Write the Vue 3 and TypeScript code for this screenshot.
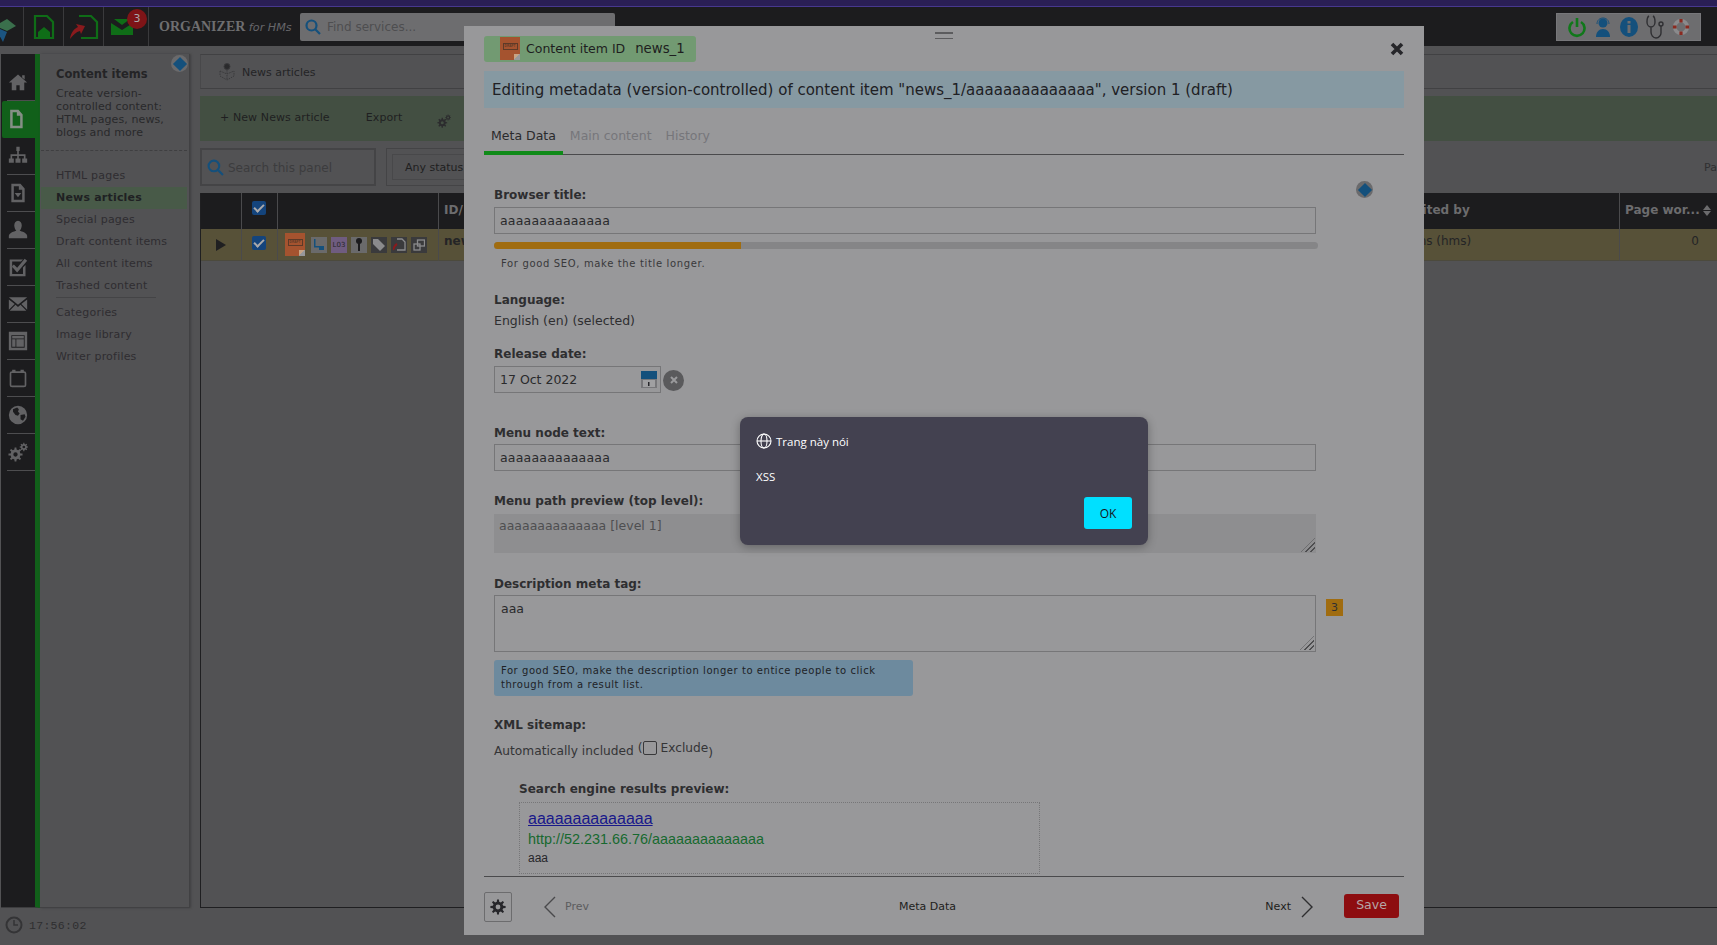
<script setup lang="ts">
// builds a cog outline, the hole is cut out through fill-rule evenodd
function gear(cx: number, cy: number, outer: number, inner: number, hole: number, teeth: number): string {
  const pts: string[] = []
  const step = (Math.PI * 2) / teeth
  for (let i = 0; i < teeth; i++) {
    const a = i * step
    const spots = [
      [a - step * 0.28, inner],
      [a - step * 0.16, outer],
      [a + step * 0.16, outer],
      [a + step * 0.28, inner]
    ]
    for (const [ang, r] of spots) {
      pts.push(`${(cx + Math.cos(ang) * r).toFixed(2)} ${(cy + Math.sin(ang) * r).toFixed(2)}`)
    }
  }
  const circle = `M${cx - hole} ${cy}a${hole} ${hole} 0 1 0 ${hole * 2} 0a${hole} ${hole} 0 1 0 ${-hole * 2} 0z`
  return `M${pts.join('L')}z${circle}`
}

const twoGears = gear(9, 15, 8.5, 6, 2.6, 8) + gear(19, 6, 5, 3.6, 1.6, 8)
const oneGear = gear(12, 12, 11.5, 8, 3.6, 8)

const railItems = [
  { id: 'home', path: 'M12 3 1 12.500h3.500V22h5.500v-6h4v6h5.500v-9.500H23zM17 4h3v5l-3-2.500z', active: false },
  { id: 'doc', path: 'M5 1h10l5 5.500V23H5zM8 4v16h9V8h-4V4z', active: true },
  { id: 'tree', path: 'M10 1h4v5h-1v4h8v5h2v5h-6v-5h2v-3h-6v3h2v5H9v-5h2v-3H5v3h2v5H1v-5h2v-5h8V6h-1z', active: false },
  { id: 'file', path: 'M4 1h11l5 5.500V23H4zM7 4v16h10V8h-4V4zm1 8h8l-4 5z', active: false },
  { id: 'user', path: 'M12 1c3 0 4.500 3 4.500 5.500S15 12 14 13c3 1 8 2 9 6v3H1v-3c1-4 6-5 9-6-1-1-2.500-4-2.500-6.500S9 1 12 1z', active: false },
  { id: 'check', path: 'M2 3h16l-2.500 2.500H5v15h13v-8l3-3V23H2zm5 6 4 4 9-11 3 2.500-12 14-6.500-7z', active: false },
  { id: 'mail', path: 'M1 4h22L12 13zM1 6.500l7 5.500-7 7zm22 0V19l-7-7zM9 13l3 2.500 3-2.500 7 7H2z', active: false },
  { id: 'layout', path: 'M1 1h22v22H1zm3 4v15h16V5zm1 1h14v3H5zm0 4h4v9H5zm5 0h9v9h-9z', active: false },
  { id: 'cal', path: 'M5 2h4v2h6V2h4v2c2 0 3 1 3 3v13c0 2-1 3-3 3H5c-2 0-3-1-3-3V7c0-2 1-3 3-3zm0 4c-1 0-1 0-1 1v13c0 1 0 1 1 1h14c1 0 1 0 1-1V7c0-1 0-1-1-1z', active: false },
  { id: 'globe', path: 'M12 1a11 11 0 1 0 0 22 11 11 0 0 0 0-22zM6 5l5-2 2 2-1 3 2 2-2 3-3-1-3-4zm9 7 5-1 1 3-3 5-3-2z', active: false },
  { id: 'gears', path: twoGears, active: false }
]

const navTop = ['HTML pages', 'News articles', 'Special pages', 'Draft content items', 'All content items', 'Trashed content']
const navBottom = ['Categories', 'Image library', 'Writer profiles']
</script>

<template>
  <div class="page">
    <div class="strip"></div>

    <header class="topbar">
      <div class="logo">
        <svg width="23" height="39" viewBox="0 0 23 39">
          <polygon points="-5,19 7,12 16,19 7,24" fill="#3a6f4c" />
          <polygon points="-5,20 7,25 3,35" fill="#1b5480" />
        </svg>
      </div>
      <div class="top-btn">
        <svg width="22" height="26" viewBox="0 0 22 26" fill="none" stroke="#0f6d17" stroke-width="2.200">
          <path d="M2 2h12l6 6v16H2z" />
          <path d="M5 18l6-5 6 5v5H5z" fill="#0f6d17" stroke="none" />
        </svg>
      </div>
      <div class="top-btn">
        <svg width="30" height="26" viewBox="0 0 30 26" fill="none">
          <path d="M10 2h12l6 6v16H12" stroke="#0f6d17" stroke-width="2.200" />
          <path d="M1 25c1-7 4-10 8-12l-2-3 9 2-4 8-1-3c-4 1-7 4-10 8z" fill="#8a1a1d" />
        </svg>
      </div>
      <div class="top-btn mail">
        <svg width="22" height="16" viewBox="0 0 22 16">
          <path d="M0 4 11 11 22 4v12H0zM3 0h16L11 6z" fill="#0f6d17" />
        </svg>
        <span class="badge">3</span>
      </div>
      <div class="brand"><b>ORGANIZER</b> <i>for HMs</i></div>
      <div class="find">
        <svg width="16" height="16" viewBox="0 0 16 16" fill="none" stroke="#14507c" stroke-width="2.200">
          <circle cx="6.500" cy="6.500" r="5" />
          <path d="m10 10 5 5" />
        </svg>
        <span>Find services...</span>
      </div>
      <div class="status-icons">
        <svg width="18" height="22" viewBox="0 0 18 22" fill="none" stroke="#10781a" stroke-width="2.600">
          <path d="M5 6a7.500 7.500 0 1 0 8 0M9 2v9" />
        </svg>
        <svg width="18" height="22" viewBox="0 0 18 22" fill="#14507c">
          <circle cx="9" cy="7" r="4.500" />
          <path d="M2 21c0-5 3-8 7-8s7 3 7 8z" />
          <path d="M3 8c0-8 12-8 12 0" fill="none" stroke="#14507c" />
        </svg>
        <svg width="18" height="22" viewBox="0 0 18 22">
          <ellipse cx="9" cy="11" rx="9" ry="10" fill="#14507c" />
          <rect x="7.500" y="9" width="3" height="8" fill="#6d6d6f" />
          <rect x="7.500" y="5" width="3" height="2.500" fill="#6d6d6f" />
        </svg>
        <svg width="18" height="24" viewBox="0 0 18 24" fill="none" stroke="#2f2f32" stroke-width="1.400">
          <path d="M3 1C1 2 1 4 1 7c0 3 2 5 4 5s4-2 4-5c0-3 0-5-2-6M5 12v5c0 3 2 6 5 6s5-3 5-5v-7" />
          <circle cx="15" cy="9" r="2" />
        </svg>
        <svg width="18" height="20" viewBox="0 0 20 22" fill="none">
          <circle cx="10" cy="11" r="7" stroke="#8a8a8c" stroke-width="4" />
          <path d="M10 2v4M10 16v4M1 11h4M15 11h4" stroke="#8a2a20" stroke-width="3.500" />
        </svg>
      </div>
    </header>

    <div class="body-row">
      <aside class="rail">
        <div v-for="item in railItems" :key="item.id" class="rail-item" :class="{ active: item.active }">
          <svg width="20" height="20" viewBox="0 0 24 24" fill-rule="evenodd"><path :d="item.path" /></svg>
        </div>
      </aside>

      <nav class="side">
        <span class="mini-help"><i></i></span>
        <h3>Content items</h3>
        <p>Create version-controlled content: HTML pages, news, blogs and more</p>
        <ul class="nav-top">
          <li v-for="n in navTop" :key="n" :class="{ current: n === 'News articles' }">{{ n }}</li>
        </ul>
        <ul class="nav-bottom">
          <li v-for="n in navBottom" :key="n">{{ n }}</li>
        </ul>
      </nav>

      <main class="main">
        <div class="crumb">
          <svg width="18" height="18" viewBox="0 0 18 18" fill="none" stroke="#3a3a3c">
            <circle cx="9" cy="3.500" r="3" fill="#2a2a2c" />
            <path d="M9 7v10M2 8l7 3 7-3M2 8v5l7 4 7-4V8" stroke-dasharray="1.500 1" />
          </svg>
          <span>News articles</span>
        </div>
        <div class="toolbar">
          <span>+ New News article</span>
          <span class="export">Export</span>
          <svg class="tool-gears" width="14" height="14" viewBox="0 0 24 24" fill="#2c2c2e" fill-rule="evenodd">
            <path :d="twoGears" />
          </svg>
        </div>
        <div class="filters">
          <div class="panel-search">
            <svg width="17" height="17" viewBox="0 0 16 16" fill="none" stroke="#14507c" stroke-width="2">
              <circle cx="6.500" cy="6.500" r="5" />
              <path d="m10 10 5 5" />
            </svg>
            <span>Search this panel</span>
          </div>
          <div class="status-filter"><div class="status-inner">Any status</div></div>
          <span class="page-label">Pa</span>
        </div>
        <div class="table">
          <div class="cell head"></div>
          <div class="cell head center"><span class="tick"></span></div>
          <div class="cell head"></div>
          <div class="cell head">ID/</div>
          <div class="cell head">Last edited by</div>
          <div class="cell head">Page wor... <em class="sort"></em></div>
          <div class="cell row center"><span class="play"></span></div>
          <div class="cell row center"><span class="tick"></span></div>
          <div class="cell row flags">
            <span class="draft-doc small"><b>DRAFT</b></span>
            <span class="flag"><svg width="12" height="12" viewBox="0 0 12 12" fill="#14507c"><path d="M1 0h1.500v7H7v1.500H1z" /><rect x="6" y="7" width="5" height="4" /></svg></span>
            <span class="flag lilac">L03</span>
            <span class="flag"><svg width="8" height="13" viewBox="0 0 8 13" fill="#1c1c1e"><circle cx="4" cy="3" r="3" /><rect x="3" y="5" width="2" height="8" /></svg></span>
            <span class="flag dark"><svg width="14" height="14" viewBox="0 0 14 14" fill="#8a8a8c"><path d="M1 1h5l7 7-5 5-7-7z" /></svg></span>
            <span class="flag dark"><svg width="13" height="13" viewBox="0 0 13 13" fill="none" stroke="#8a8a8c" stroke-width="1.300"><path d="M4 1h5l3 3v8H4" /><path d="M0 12c1-3 2-5 4-6" stroke="#8a1a1d" stroke-width="2" /></svg></span>
            <span class="flag dark"><svg width="12" height="12" viewBox="0 0 12 12" fill="none" stroke="#8a8a8c" stroke-width="1.300"><rect x="4.500" y="1" width="7" height="6" /><rect x="1" y="5" width="6" height="6" /></svg></span>
          </div>
          <div class="cell row strong">news_1</div>
          <div class="cell row editor">Admins (hms)</div>
          <div class="cell row num">0</div>
        </div>
      </main>
    </div>

    <footer class="clock">
      <svg width="18" height="18" viewBox="0 0 18 18" fill="none" stroke="#343436" stroke-width="2">
        <circle cx="9" cy="9" r="7.500" />
        <path d="M9 4v5h4" stroke-width="1.500" />
      </svg>
      <span>17:56:02</span>
    </footer>

    <section class="modal">
      <div class="grip"></div>
      <svg class="close" width="14" height="14" viewBox="0 0 14 14" stroke="#26262a" stroke-width="3.600">
        <path d="m2 2 10 10M12 2 2 12" />
      </svg>

      <div class="tag">
        <span class="draft-doc"><b>DRAFT</b></span>
        <span>Content item ID&nbsp;&nbsp;<span class="tag-id">news_1</span></span>
      </div>
      <div class="heading">Editing metadata (version-controlled) of content item "news_1/aaaaaaaaaaaaaa", version 1 (draft)</div>

      <div class="tabs">
        <span class="tab on">Meta Data</span>
        <span class="tab">Main content</span>
        <span class="tab">History</span>
      </div>

      <div class="form">
        <span class="mini-help form-help"><i></i></span>

        <label class="first">Browser title:</label>
        <div class="input">aaaaaaaaaaaaaa</div>
        <div class="seo-bar"><div class="seo-fill" :style="{ width: '30%' }"></div></div>
        <div class="hint">For good SEO, make the title longer.</div>

        <label class="lang">Language:</label>
        <div class="plain">English (en) (selected)</div>

        <label class="release">Release date:</label>
        <div class="date-row">
          <div class="input date">
            <span>17 Oct 2022</span>
            <svg width="16" height="17" viewBox="0 0 16 17">
              <rect width="16" height="17" fill="#77777a" />
              <rect width="16" height="8" fill="#14507c" />
              <rect x="2" y="9" width="12" height="7" fill="#a0a0a2" />
              <rect x="7" y="11" width="1.500" height="4" fill="#26262a" />
            </svg>
          </div>
          <span class="clear-btn">
            <svg width="8" height="8" viewBox="0 0 8 8" stroke="#9a9a9c" stroke-width="2"><path d="m1 1 6 6M7 1 1 7" /></svg>
          </span>
        </div>

        <label class="menu-label">Menu node text:</label>
        <div class="input menu-input">aaaaaaaaaaaaaa</div>

        <label class="path-label">Menu path preview (top level):</label>
        <div class="path-box">
          aaaaaaaaaaaaaa [level 1]
          <span class="resize"></span>
        </div>

        <label class="desc-label">Description meta tag:</label>
        <div class="desc-row">
          <div class="textarea">aaa<span class="resize"></span></div>
          <span class="count">3</span>
        </div>
        <div class="seo-note">For good SEO, make the description longer to entice people to click through from a result list.</div>

        <label class="xml-label">XML sitemap:</label>
        <div class="xml-row">
          <span>Automatically included</span>
          <span class="paren">(</span>
          <span class="box"></span>
          <span class="exclude">Exclude</span>
          <span class="paren low">)</span>
        </div>

        <div class="serp">
          <label>Search engine results preview:</label>
          <div class="serp-box">
            <a>aaaaaaaaaaaaaa</a>
            <div class="url">http://52.231.66.76/aaaaaaaaaaaaaa</div>
            <div class="snippet">aaa</div>
          </div>
        </div>
      </div>

      <div class="modal-foot">
        <span class="gear-btn">
          <svg width="16" height="16" viewBox="0 0 24 24" fill="#26262a" fill-rule="evenodd">
            <path :d="oneGear" />
          </svg>
        </span>
        <svg class="prev-arrow" width="13" height="22" viewBox="0 0 13 22" fill="none" stroke="#4a4a4c" stroke-width="1.400"><path d="M12 1 2 11l10 10" /></svg>
        <span class="prev">Prev</span>
        <span class="foot-mid">Meta Data</span>
        <span class="next">Next</span>
        <svg class="next-arrow" width="13" height="22" viewBox="0 0 13 22" fill="none" stroke="#2e2e30" stroke-width="1.400"><path d="m1 1 10 10L1 21" /></svg>
        <span class="save">Save</span>
      </div>
    </section>

    <section class="alert">
      <div class="alert-title">
        <svg width="16" height="16" viewBox="0 0 16 16" fill="none" stroke="#fff" stroke-width="1.100">
          <circle cx="8" cy="8" r="7" />
          <ellipse cx="8" cy="8" rx="3" ry="7" />
          <path d="M1 8h14" />
        </svg>
        <span>Trang này nói</span>
      </div>
      <div class="alert-msg">XSS</div>
      <div class="alert-actions"><button type="button">OK</button></div>
    </section>
  </div>
</template>

<style scoped>
.page {
  position: relative;
  width: 1717px;
  height: 945px;
  overflow: hidden;
  background: #525254;
  font-family: "DejaVu Sans", Verdana, sans-serif;
  font-size: 11px;
  color: #2c2c2e;
}

.strip {
  height: 6px;
  background: #2a1f55;
  border-bottom: 1px solid #47388f;
}

.topbar {
  display: flex;
  align-items: center;
  height: 39px;
  background: #1c1c1e;
}

.logo {
  width: 23px;
  height: 39px;
  border-right: 1px solid #3a3a3c;
}

.top-btn {
  position: relative;
  display: flex;
  align-items: center;
  justify-content: center;
  width: 39px;
  height: 39px;
  border-right: 1px solid #3a3a3c;
}

.top-btn.mail {
  width: 45px;
  justify-content: flex-start;
  padding-left: 7px;
  box-sizing: border-box;
}

.top-btn .badge {
  position: absolute;
  top: 2px;
  left: 23px;
  width: 20px;
  height: 20px;
  line-height: 20px;
  border-radius: 50%;
  text-align: center;
  background: #7e1417;
  color: #a9a9ab;
  font-size: 11px;
}

.brand {
  margin-left: 10px;
  width: 141px;
  color: #6e6e70;
  font-family: "Liberation Serif", serif;
  font-size: 14px;
  white-space: nowrap;
}

.brand i {
  font-family: "DejaVu Sans", sans-serif;
  font-size: 11.200px;
  font-weight: 400;
  color: #66666a;
}

.find {
  display: flex;
  align-items: center;
  gap: 6px;
  box-sizing: border-box;
  width: 315px;
  height: 28px;
  padding-left: 5px;
  border-radius: 2px;
  background: #6d6d6f;
  color: #4e4e50;
  font-size: 12px;
}

.status-icons {
  display: flex;
  align-items: center;
  justify-content: center;
  gap: 8px;
  box-sizing: border-box;
  width: 145px;
  height: 28px;
  margin-left: auto;
  margin-right: 16px;
  background: #6d6d6f;
  border: 1px solid #77777a;
}

.body-row {
  display: flex;
  height: 854px;
  margin-top: 8px;
  padding-left: 1px;
}

.rail {
  width: 34px;
  background: #1c1c1e;
  border-right: 5px solid #11601a;
  border-bottom: 1px solid #3c3c3e;
}

.rail-item {
  display: flex;
  align-items: center;
  justify-content: center;
  box-sizing: border-box;
  height: 37px;
  margin: 0 0 0 6px;
  padding-right: 6px;
  border-bottom: 1px solid #4d4d4f;
  fill: #626264;
}

.rail-item:first-child {
  height: 47px;
  padding-top: 10px;
}

.rail-item.active {
  margin-left: 1px;
  background: #11601a;
  fill: #858f86;
  border-bottom-color: #11601a;
  border-radius: 2px 0 0 2px;
}

.side {
  position: relative;
  box-sizing: border-box;
  width: 150px;
  background: #525254;
  border-right: 1px solid #414143;
  border-bottom: 1px solid #414143;
  box-shadow: 1px 0 2px #404042;
}

.side h3 {
  margin: 13px 0 0 16px;
  font-size: 11.500px;
  line-height: 14px;
  color: #242426;
}

.side p {
  margin: 6px 8px 0 16px;
  padding: 0;
  font-size: 11px;
  line-height: 13px;
  letter-spacing: 0.100px;
  color: #29292b;
}

.nav-top,
.nav-bottom {
  list-style: none;
  margin: 0;
  padding: 0;
  color: #2f2d31;
  font-size: 11px;
  letter-spacing: 0.200px;
}

.nav-top {
  margin: 11px 2px 0 1px;
  padding-top: 14px;
  border-top: 1px dashed #3f3f41;
}

.nav-top li,
.nav-bottom li {
  height: 22px;
  line-height: 22px;
  padding-left: 15px;
}

.nav-top li.current {
  background: #485a48;
  color: #1f2123;
  font-weight: 700;
}

.nav-bottom {
  margin: 0 0 0 16px;
  padding-top: 4px;
  width: 100px;
  border-top: 1px solid #444446;
}

.nav-bottom li {
  padding-left: 0;
  width: 140px;
}

.mini-help {
  position: absolute;
  display: flex;
  align-items: center;
  justify-content: center;
  width: 17px;
  height: 17px;
  border-radius: 50%;
  top: 1px;
  right: 1px;
  background: #6a6a6c;
}

.mini-help i {
  width: 10px;
  height: 10px;
  background: #14507c;
  transform: rotate(45deg);
}

.main {
  flex: 1;
  min-width: 0;
  margin-left: 10px;
}

.crumb {
  display: flex;
  align-items: center;
  gap: 6px;
  box-sizing: border-box;
  height: 35px;
  padding: 1px 0 0 17px;
  border: 1px solid #414143;
  border-right: 0;
  border-left-color: #48484a;
  color: #242426;
  font-size: 11px;
}

.toolbar {
  display: flex;
  align-items: center;
  height: 45px;
  margin-top: 7px;
  padding: 0 0 2px 20px;
  box-sizing: border-box;
  background: #434f42;
  color: #1f1f21;
  font-size: 11px;
  letter-spacing: 0.100px;
}

.toolbar .export {
  margin: 0 35px 0 36px;
}

.tool-gears {
  margin-top: 6px;
}

.filters {
  display: flex;
  align-items: center;
  height: 38px;
  margin-top: 7px;
}

.panel-search {
  display: flex;
  align-items: center;
  gap: 4px;
  box-sizing: border-box;
  width: 176px;
  height: 38px;
  padding: 1px 0 0 5px;
  border: 2px solid #444446;
  color: #3c3c3e;
  font-size: 12px;
}

.status-filter {
  box-sizing: border-box;
  width: 120px;
  height: 38px;
  margin-left: 10px;
  padding: 5px;
  border: 1px solid #444446;
}

.status-inner {
  box-sizing: border-box;
  height: 26px;
  padding-left: 12px;
  line-height: 26px;
  border: 1px solid #48484a;
  color: #1f1f21;
  font-size: 11px;
}

.page-label {
  margin-left: auto;
  color: #303032;
}

.table {
  display: grid;
  grid-template-columns: 40px 36px 161px 929px 252px 1fr;
  grid-template-rows: 36px 32px 1fr;
  height: 714px;
  margin-top: 7px;
  border-left: 1px solid #1f1f21;
  border-bottom: 1px solid #1f1f21;
}

.cell {
  display: flex;
  align-items: center;
  padding-left: 5px;
  border-left: 1px solid #4a4a4c;
}

.cell:nth-child(6n + 1) {
  border-left: 0;
}

.cell.center {
  justify-content: center;
  padding-left: 0;
}

.head {
  background: #1c1c1e;
  box-sizing: border-box;
  padding-bottom: 2px;
  color: #6c6c6e;
  font-weight: 700;
  font-size: 12px;
}

.row {
  align-items: flex-start;
  padding-top: 5px;
  box-sizing: border-box;
  background: #575138;
  border-bottom: 1px solid #4c4a3d;
  color: #242426;
  font-size: 12px;
}

.row.center {
  align-items: center;
  padding-top: 0;
}

.row.center .tick {
  margin: -4px 2px 0 0;
}

.row.strong {
  font-weight: 700;
}

.row.editor {
  padding-left: 20px;
}

.row.num {
  justify-content: flex-end;
  padding-right: 18px;
}

.row.flags {
  align-items: center;
  gap: 4px;
  padding: 0 0 0 7px;
}

.tick {
  position: relative;
  width: 14px;
  height: 14px;
  border-radius: 2px;
  background: #14447c;
}

.tick::after {
  content: "";
  position: absolute;
  left: 4px;
  top: 1px;
  width: 4px;
  height: 8px;
  border: solid #a9a9ab;
  border-width: 0 2px 2px 0;
  transform: rotate(45deg);
}

.head .tick {
  margin: -5px 2px 0 0;
}

.play {
  width: 0;
  height: 0;
  border-left: 10px solid #1f1f21;
  border-top: 6px solid transparent;
  border-bottom: 6px solid transparent;
}

.sort {
  position: relative;
  display: inline-block;
  width: 0;
  height: 0;
  margin: -6px 0 0 3px;
  border-left: 4px solid transparent;
  border-right: 4px solid transparent;
  border-bottom: 5px solid #6c6c6e;
}

.sort::after {
  content: "";
  position: absolute;
  left: -4px;
  top: 6px;
  width: 0;
  height: 0;
  border-left: 4px solid transparent;
  border-right: 4px solid transparent;
  border-top: 5px solid #6c6c6e;
}

.draft-doc {
  position: relative;
  display: inline-flex;
  justify-content: center;
  align-items: flex-start;
  width: 20px;
  height: 23px;
  background: #a5532f;
}

.draft-doc b {
  box-sizing: border-box;
  margin-top: 6px;
  width: 15px;
  height: 7px;
  border: 1px solid #5d3a28;
  color: #5d3a28;
  font-family: "Liberation Sans", sans-serif;
  font-size: 3.200px;
  line-height: 5px;
  text-align: center;
}

.draft-doc::after {
  content: "";
  position: absolute;
  right: 0;
  bottom: 0;
  width: 6px;
  height: 6px;
  background: linear-gradient(135deg, #c7a384 50%, #98989a 50%);
}

.draft-doc.small {
  flex: none;
  margin-right: 2px;
}

.flag {
  display: flex;
  align-items: center;
  justify-content: center;
  flex: none;
  width: 16px;
  height: 16px;
  background: #6a6a6b;
  font-size: 7px;
}

.flag.lilac {
  background: #6f5c80;
  color: #26262a;
}

.flag.dark {
  background: #3a3a3c;
}

.clock {
  display: flex;
  align-items: center;
  gap: 6px;
  height: 28px;
  margin-top: 3px;
  padding-left: 5px;
  color: #2e2e30;
  font-family: "Liberation Mono", monospace;
  font-size: 11.500px;
  letter-spacing: 0.300px;
}

.modal {
  position: absolute;
  left: 464px;
  top: 26px;
  display: flex;
  flex-direction: column;
  box-sizing: border-box;
  width: 960px;
  height: 909px;
  padding: 10px 20px 0;
  background: #98989a;
}

.grip {
  position: absolute;
  top: 6px;
  left: 471px;
  width: 18px;
  height: 5px;
  border-top: 1px solid #5c5c5e;
  border-bottom: 1px solid #5c5c5e;
  box-shadow: inset 0 2px 0 -1px #5c5c5e;
}

.close {
  position: absolute;
  top: 16px;
  right: 20px;
}

.tag {
  display: flex;
  align-items: center;
  gap: 6px;
  box-sizing: border-box;
  width: 212px;
  height: 26px;
  padding: 0 0 1px 16px;
  border-radius: 3px;
  background: #729a72;
  font-size: 12.500px;
  color: #1e1e20;
}

.tag-id {
  font-size: 13.300px;
  margin-left: 2px;
}

.heading {
  display: flex;
  align-items: center;
  height: 37px;
  margin-top: 9px;
  padding-left: 8px;
  background: #8699a2;
  color: #202024;
  font-size: 15px;
  white-space: nowrap;
}

.tabs {
  display: flex;
  gap: 0;
  height: 37px;
  margin-top: 9px;
  border-bottom: 1px solid #4a4a4c;
  box-sizing: content-box;
  font-size: 12.500px;
  color: #76767a;
}

.tab {
  box-sizing: border-box;
  height: 38px;
  padding: 11px 7px 0;
}

.tab.on {
  color: #2a2a2c;
  border-bottom: 4px solid #0f8a18;
}

.form {
  position: relative;
  flex: 1;
  min-height: 0;
  overflow: hidden;
  padding-left: 10px;
}

.form-help {
  top: 26px;
  right: 31px;
}

label {
  display: block;
  font-weight: 700;
  font-size: 12px;
  line-height: 15px;
  color: #2e2e30;
}

.first {
  margin-top: 33px;
}

.input {
  box-sizing: border-box;
  width: 822px;
  height: 27px;
  margin-top: 4px;
  padding-left: 5px;
  line-height: 25px;
  border: 1px solid #767678;
  color: #2a2a2c;
  font-size: 12.500px;
  letter-spacing: 0.200px;
}

.menu-input {
  margin-top: 3px;
}

.seo-bar {
  width: 824px;
  height: 7px;
  margin-top: 8px;
  border-radius: 4px;
  background: #858587;
  overflow: hidden;
}

.seo-fill {
  height: 100%;
  background: #a06c10;
}

.hint {
  margin: 9px 0 0 7px;
  font-size: 10px;
  line-height: 12px;
  letter-spacing: 0.650px;
  color: #38383a;
}

.lang {
  margin-top: 23px;
}

.plain {
  margin-top: 5px;
  font-size: 12.500px;
  line-height: 16px;
  color: #2e2e30;
}

.release {
  margin-top: 18px;
}

.date-row {
  display: flex;
  align-items: center;
  gap: 3px;
}

.input.date {
  display: flex;
  align-items: center;
  justify-content: space-between;
  width: 167px;
  padding-right: 3px;
  letter-spacing: 0;
}

.clear-btn {
  display: flex;
  align-items: center;
  justify-content: center;
  width: 21px;
  height: 21px;
  margin: 5px 0 0 -1px;
  border-radius: 50%;
  background: #5a5a5c;
}

.menu-label {
  margin-top: 33px;
}

.path-label {
  margin-top: 23px;
}

.path-box {
  position: relative;
  box-sizing: border-box;
  width: 822px;
  height: 39px;
  margin-top: 5px;
  padding: 4px 5px;
  background: #8e8e90;
  color: #4e4e50;
  font-size: 12.500px;
}

.resize {
  position: absolute;
  right: 1px;
  bottom: 1px;
  width: 14px;
  height: 14px;
  background: repeating-linear-gradient(135deg, transparent 0 2px, #4e4e50 2px 3.500px);
  clip-path: polygon(100% 0, 100% 100%, 0 100%);
}

.desc-label {
  margin-top: 24px;
}

.desc-row {
  display: flex;
  align-items: flex-start;
  gap: 10px;
  margin-top: 3px;
}

.textarea {
  position: relative;
  box-sizing: border-box;
  width: 822px;
  height: 57px;
  padding: 5px 6px;
  border: 1px solid #767678;
  color: #2a2a2c;
  font-size: 12.500px;
}

.count {
  width: 17px;
  height: 17px;
  margin-top: 4px;
  line-height: 17px;
  text-align: center;
  background: #a06c10;
  color: #303032;
  font-size: 11px;
}

.seo-note {
  box-sizing: border-box;
  width: 419px;
  height: 36px;
  margin-top: 8px;
  padding: 4px 7px;
  border-radius: 3px;
  background: #6d8a9e;
  color: #1e2226;
  font-size: 10px;
  line-height: 14px;
  letter-spacing: 0.550px;
}

.xml-label {
  margin-top: 22px;
}

.xml-row {
  display: flex;
  align-items: center;
  margin-top: 10px;
  height: 16px;
  font-size: 12.200px;
  color: #343436;
}

.paren {
  margin: -6px 0 0 4px;
}

.paren.low {
  margin: 4px 0 0 0;
}

.box {
  width: 12px;
  height: 12px;
  margin-top: -6px;
  border: 1.500px solid #38383a;
  border-radius: 2px;
}

.exclude {
  margin: -6px 0 0 4px;
}

.serp {
  margin: 23px 0 0 25px;
}

.serp-box {
  box-sizing: border-box;
  width: 521px;
  height: 72px;
  margin-top: 5px;
  padding: 6px 8px;
  border: 1px dotted #767678;
  font-family: "Liberation Sans", Arial, sans-serif;
}

.serp-box a {
  display: block;
  color: #18188a;
  font-size: 16px;
  line-height: 20px;
  text-decoration: underline;
}

.url {
  margin-top: 2px;
  color: #17692f;
  font-size: 14.400px;
  line-height: 17px;
}

.snippet {
  margin-top: 3px;
  color: #26262a;
  font-size: 12px;
  line-height: 15px;
}

.modal-foot {
  display: flex;
  align-items: center;
  flex: none;
  box-sizing: border-box;
  height: 59px;
  padding-top: 1px;
  border-top: 1px solid #4a4a4c;
  font-size: 11px;
  color: #1e1e20;
}

.gear-btn {
  display: flex;
  align-items: center;
  justify-content: center;
  box-sizing: border-box;
  width: 28px;
  height: 30px;
  border: 1px solid #6c6c6e;
  border-radius: 2px;
}

.prev-arrow {
  margin-left: 31px;
}

.prev {
  margin-left: 9px;
  color: #5c5c5e;
}

.foot-mid {
  margin-left: 310px;
}

.next {
  margin-left: auto;
}

.next-arrow {
  margin-left: 10px;
}

.save {
  box-sizing: border-box;
  width: 55px;
  height: 24px;
  margin: -1px 5px 0 30px;
  border-radius: 3px;
  line-height: 22px;
  text-align: center;
  background: #8d0d10;
  color: #b6a6a6;
  font-size: 12.500px;
}

.alert {
  position: absolute;
  left: 740px;
  top: 417px;
  box-sizing: border-box;
  width: 408px;
  height: 128px;
  padding: 16px 16px 0;
  border-radius: 8px;
  background: #434150;
  color: #fff;
  font-family: "Open Sans", "Noto Sans", sans-serif;
  font-size: 11.500px;
  box-shadow: 0 2px 10px rgba(0, 0, 0, 0.3);
}

.alert-title {
  display: flex;
  align-items: center;
  gap: 4px;
  height: 16px;
}

.alert-msg {
  margin-top: 20px;
  line-height: 16px;
}

.alert-actions {
  display: flex;
  justify-content: flex-end;
  margin-top: 12px;
}

.alert-actions button {
  width: 48px;
  height: 32px;
  border: 0;
  border-radius: 3px;
  background: #00e0ff;
  color: #16161c;
  font-family: inherit;
  font-size: 12px;
}
</style>

<style>
html, body {
  margin: 0;
  background: #525254;
  overflow: hidden;
}
</style>
